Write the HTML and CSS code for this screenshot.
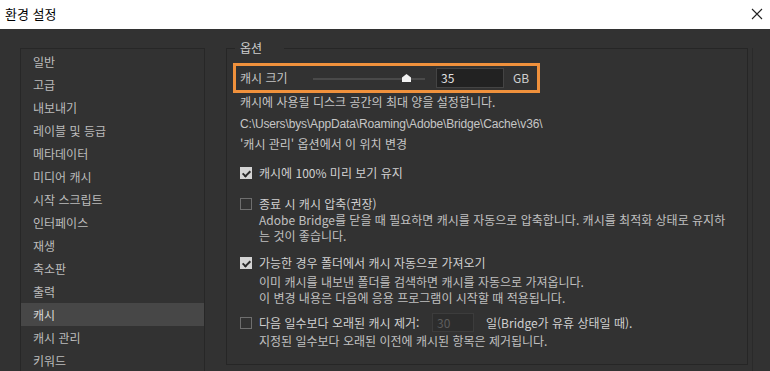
FILE: index.html
```html
<!DOCTYPE html>
<html lang="ko">
<head>
<meta charset="utf-8">
<title>환경 설정</title>
<link rel="stylesheet" href="styles.css">
</head>
<body>
<div class="window">
  <div class="titlebar">
    <span class="title">환경 설정</span>
    <svg class="close" width="12" height="12" viewBox="0 0 12 12"><path d="M1 1 L11 11 M11 1 L1 11" stroke="#222" stroke-width="1.1" fill="none"/></svg>
  </div>
  <div class="main">
    <ul class="sidebar">
      <li>일반</li>
      <li>고급</li>
      <li>내보내기</li>
      <li>레이블 및 등급</li>
      <li>메타데이터</li>
      <li>미디어 캐시</li>
      <li>시작 스크립트</li>
      <li>인터페이스</li>
      <li>재생</li>
      <li>축소판</li>
      <li>출력</li>
      <li class="active">캐시</li>
      <li>캐시 관리</li>
      <li>키워드</li>
    </ul>
    <div class="content">
      <div class="group">
        <div class="legend">옵션</div>
        <div class="size-row">
          <span class="size-label">캐시 크기</span>
          <div class="slider"><div class="track"></div><div class="thumb"></div></div>
          <div class="field">35</div>
          <span class="unit">GB</span>
        </div>
        <p class="line first">캐시에 사용될 디스크 공간의 최대 양을 설정합니다.</p>
        <p class="line path">C:\Users\bys\AppData\Roaming\Adobe\Bridge\Cache\v36\</p>
        <p class="line loc">'캐시 관리' 옵션에서 이 위치 변경</p>

        <div class="check c1"><span class="box on"></span><span>캐시에 100% 미리 보기 유지</span></div>

        <div class="check c2"><span class="box"></span><span>종료 시 캐시 압축(권장)</span></div>
        <p class="desc one">Adobe Bridge를 닫을 때 필요하면 캐시를 자동으로 압축합니다. 캐시를 최적화 상태로 유지하<br>는 것이 좋습니다.</p>

        <div class="check c3"><span class="box on"></span><span>가능한 경우 폴더에서 캐시 자동으로 가져오기</span></div>
        <p class="desc two">이미 캐시를 내보낸 폴더를 검색하면 캐시를 자동으로 가져옵니다.<br>이 변경 내용은 다음에 응용 프로그램이 시작할 때 적용됩니다.</p>

        <div class="check c4"><span class="box"></span><span class="lbl4">다음 일수보다 오래된 캐시 제거:</span><span class="field dis">30</span><span>일(Bridge가 유휴 상태일 때).</span></div>
        <p class="desc last">지정된 일수보다 오래된 이전에 캐시된 항목은 제거됩니다.</p>
      </div>
    </div>
  </div>
</div>
</body>
</html>
```
FILE: styles.css
```css
* { box-sizing: border-box; }
html, body { margin: 0; padding: 0; }
body {
  width: 770px;
  height: 371px;
  overflow: hidden;
  font-family: "Noto Sans CJK KR", "Noto Sans", sans-serif;
  font-size: 12px;
  background: #323232;
}
.window { display: flex; flex-direction: column; height: 371px; }
.titlebar {
  height: 29px;
  background: #fff;
  display: flex;
  align-items: center;
  justify-content: space-between;
  padding: 0 7px 0 5px;
  flex: none;
}
.title { font-size: 13px; color: #000; line-height: 16px; margin-top: -2px; }
.close { margin-top: -2px; }
.main {
  flex: 1;
  display: flex;
  align-items: flex-start;
  padding-top: 19px;
  background: #323232;
}
.sidebar {
  list-style: none;
  margin: 0 0 0 20px;
  padding: 1px 0 0;
  width: 185px;
  height: 340px;
  border: 1px solid #272727;
  border-bottom: none;
  color: #bcbcbc;
  flex: none;
}
.sidebar li {
  height: 23px;
  line-height: 23px;
  padding-left: 12px;
}
.sidebar li.active { background: #474747; color: #d8d8d8; }
.content {
  margin-left: 21px;
  width: 527px;
  flex: none;
  border-right: 1px solid #2a2a2a;
  padding-right: 4px;
  height: 340px;
}
.group {
  border: 1px solid #262626;
  height: 317px;
  color: #c6c6c6;
  padding-left: 13px;
}
.legend {
  margin: -10px 0 0 -5px;
  padding: 0 22px 0 5px;
  width: fit-content;
  background: #323232;
  line-height: 18px;
  color: #cfcfcf;
}
.size-row {
  margin: 6px 0 0 -7px;
  width: 307px;
  height: 30px;
  border: 3px solid #f0913c;
  display: flex;
  align-items: center;
  padding-left: 4px;
}
.size-label { width: 73px; line-height: 16px; }
.slider { position: relative; width: 112px; height: 14px; }
.track { position: absolute; left: 0; right: 0; top: 7px; height: 2px; background: #4a4a4a; }
.thumb {
  position: absolute;
  left: 89px; top: 3px;
  width: 9px; height: 8px;
  background: #f2f2f2;
  clip-path: polygon(50% 0, 100% 45%, 100% 100%, 0 100%, 0 45%);
}
.field {
  margin-left: 11px;
  width: 68px;
  height: 20px;
  background: #222;
  border: 1px solid #444;
  color: #e0e0e0;
  line-height: 18px;
  padding-left: 4px;
}
.unit { margin-left: 9px; line-height: 16px; color: #cfcfcf; }
p { margin: 0; }
.line { line-height: 20px; }
.line.first { margin-top: -1px; }
.line.path { margin-top: 2px; font-family: "Liberation Sans", sans-serif; letter-spacing: -0.15px; }
.line.loc { margin-top: 0; }
.check {
  display: flex;
  align-items: center;
  line-height: 18px;
  color: #d0d0d0;
}
.box {
  width: 12px; height: 12px;
  border: 1px solid #6e6e6e;
  margin-right: 7px;
  flex: none;
  position: relative;
}
.box.on { background: #d4d4d4; border-color: #d4d4d4; }
.box.on::after {
  content: "";
  position: absolute;
  left: 3px; top: 1px;
  width: 3px; height: 6px;
  border: solid #2a2a2a;
  border-width: 0 2px 2px 0;
  transform: rotate(45deg);
}
.c1 { margin-top: 10px; }
.c2 { margin-top: 13px; }
.c3 { margin-top: 10px; }
.c4 { margin-top: 7px; }
.desc { margin-left: 19px; line-height: 16px; color: #c0c0c0; }
.desc.one { margin-top: -1px; }
.desc.two { margin-top: 2px; }
.desc.last { margin-top: 1px; }
.lbl4 { width: 173px; }
.field.dis {
  margin-left: 0;
  width: 42px;
  height: 19px;
  background: #2d2d2d;
  border-color: #3c3c3c;
  color: #5d5d5d;
  margin-right: 12px;
  line-height: 17px;
}
```
